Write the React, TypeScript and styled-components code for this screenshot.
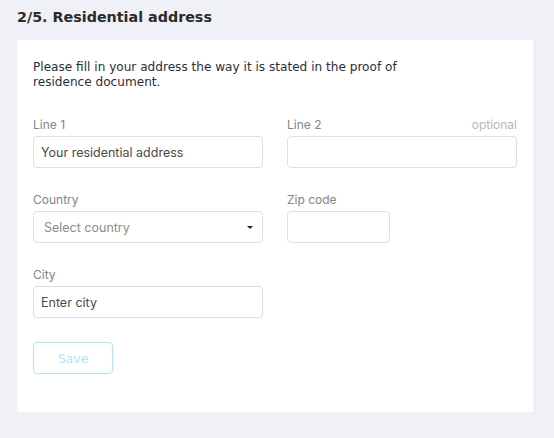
import React from "react";
import styled, { createGlobalStyle } from "styled-components";

const Global = createGlobalStyle`
  html, body { margin: 0; padding: 0; background: #f0f1f6; }
  * { box-sizing: border-box; }
`;

const Page = styled.div`
  width: 554px;
  min-height: 438px;
  padding: 8px 21px 0 17px;
`;

const Title = styled.h2`
  margin: 0;
  font-family: "DejaVu Sans", Verdana, sans-serif;
  font-weight: bold;
  font-size: 14.3px;
  line-height: 18px;
  color: #2b2b2b;
`;

const Card = styled.div`
  margin-top: 14px;
  background: #fff;
  padding: 20px 16px 38px 16px;
`;

const Intro = styled.p`
  margin: 0 0 28px 0;
  max-width: 380px;
  font-family: "DejaVu Sans", Verdana, sans-serif;
  font-size: 12.1px;
  line-height: 14.5px;
  color: #2d2d3a;
`;

const Grid = styled.div`
  display: grid;
  grid-template-columns: 230px 230px;
  column-gap: 24px;
  row-gap: 24px;
`;

const Field = styled.div`
  display: flex;
  flex-direction: column;
  gap: 3px;
`;

const LabelRow = styled.div`
  display: flex;
  justify-content: space-between;
  font-family: Inter, "Liberation Sans", sans-serif;
  font-size: 12px;
  line-height: 16px;
  color: #858585;
`;

const Optional = styled.span`
  color: #b8b8b8;
`;

const Box = styled.div<{ $w?: number; $placeholder?: boolean }>`
  position: relative;
  width: ${(p) => (p.$w ? `${p.$w}px` : "100%")};
  height: 32px;
  border: 1px solid #dedde8;
  border-radius: 4px;
  background: #fff;
  display: flex;
  align-items: center;
  padding: 0 7px;
  font-family: Inter, "Liberation Sans", sans-serif;
  font-size: 12.5px;
  color: ${(p) => (p.$placeholder ? "#8c8c8c" : "#4a4a4a")};
`;

const SelectBox = styled(Box)`
  padding: 0 10px;
  justify-content: space-between;
`;

const Caret = styled.span`
  width: 0;
  height: 0;
  border-left: 3px solid transparent;
  border-right: 3px solid transparent;
  border-top: 3px solid #222;
  margin-right: -1px;
`;

const SaveButton = styled.button`
  margin-top: 24px;
  width: 80px;
  height: 32px;
  border: 1px solid #b2e4f6;
  border-radius: 4px;
  background: #fff;
  color: #b2e4f6;
  font-family: "DejaVu Sans", Verdana, sans-serif;
  font-size: 12.5px;
  padding: 0;
`;

export default function App() {
  return (
    <Page>
      <Global />
      <Title>2/5. Residential address</Title>
      <Card>
        <Intro>
          Please fill in your address the way it is stated in the proof of residence document.
        </Intro>
        <Grid>
          <Field>
            <LabelRow>Line 1</LabelRow>
            <Box>Your residential address</Box>
          </Field>
          <Field>
            <LabelRow>
              <span>Line 2</span>
              <Optional>optional</Optional>
            </LabelRow>
            <Box />
          </Field>
          <Field>
            <LabelRow>Country</LabelRow>
            <SelectBox $placeholder>
              <span>Select country</span>
              <Caret />
            </SelectBox>
          </Field>
          <Field>
            <LabelRow>Zip code</LabelRow>
            <Box $w={103} />
          </Field>
          <Field>
            <LabelRow>City</LabelRow>
            <Box>Enter city</Box>
          </Field>
        </Grid>
        <SaveButton>Save</SaveButton>
      </Card>
    </Page>
  );
}
